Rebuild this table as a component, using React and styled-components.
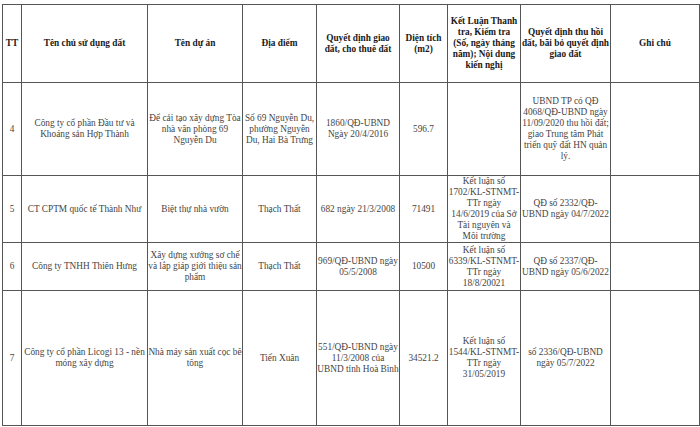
import styled, { createGlobalStyle } from "styled-components";

const GlobalStyle = createGlobalStyle`
  html, body {
    margin: 0;
    padding: 0;
    background: #fff;
  }
`;

const Page = styled.div`
  padding: 4px 1px 0 2px;
  width: 700px;
  box-sizing: border-box;
`;

const Table = styled.table`
  width: 697px;
  border-collapse: collapse;
  table-layout: fixed;
  font-family: "Liberation Serif", "Times New Roman", serif;
  font-size: 9.3px;
  line-height: 11px;
  color: #444;
`;

const Th = styled.th`
  border: 1px solid #555;
  font-weight: bold;
  color: #1a1a1a;
  text-align: center;
  vertical-align: middle;
  padding: 0;
  white-space: pre-line;
`;

const Td = styled.td`
  border: 1px solid #555;
  text-align: center;
  vertical-align: middle;
  padding: 0;
  white-space: pre-line;
`;

const Row = styled.tr`
  height: ${(p) => p.h}px;
`;

const widths = [19, 126, 95, 74, 83, 48, 73, 90, 89];

const headers = [
  "TT",
  "Tên chủ sử dụng đất",
  "Tên dự án",
  "Địa điểm",
  "Quyết định giao\nđất, cho thuê đất",
  "Diện tích\n(m2)",
  "Kết Luận Thanh\ntra, Kiểm tra\n(Số, ngày tháng\nnăm); Nội dung\nkiến nghị",
  "Quyết định thu hồi\nđất, bãi bỏ quyết định\ngiao đất",
  "Ghi chú",
];

const rows = [
  {
    h: 93,
    cells: [
      "4",
      "Công ty cổ phần Đầu tư và\nKhoáng sản Hợp Thành",
      "Để cải tạo xây dựng Tòa\nnhà văn phòng 69\nNguyễn Du",
      "Số 69 Nguyễn Du,\nphường Nguyễn\nDu, Hai Bà Trưng",
      "1860/QĐ-UBND\nNgày 20/4/2016",
      "596.7",
      "",
      "UBND TP có QĐ\n4068/QĐ-UBND ngày\n11/09/2020 thu hồi đất;\ngiao Trung tâm Phát\ntriển quỹ đất HN quản\nlý.",
      "",
    ],
  },
  {
    h: 67,
    cells: [
      "5",
      "CT CPTM quốc tế Thành Như",
      "Biệt thự nhà vườn",
      "Thạch Thất",
      "682 ngày 21/3/2008",
      "71491",
      "Kết luận số\n1702/KL-STNMT-\nTTr ngày\n14/6/2019 của Sở\nTài nguyên và\nMôi trường",
      "QĐ số 2332/QĐ-\nUBND ngày 04/7/2022",
      "",
    ],
  },
  {
    h: 48,
    cells: [
      "6",
      "Công ty TNHH Thiên Hưng",
      "Xây dựng xưởng sơ chế\nvà lắp giáp giới thiệu sản\nphẩm",
      "Thạch Thất",
      "969/QĐ-UBND ngày\n05/5/2008",
      "10500",
      "Kết luận số\n6339/KL-STNMT-\nTTr ngày\n18/8/20021",
      "QĐ số 2337/QĐ-\nUBND ngày 05/6/2022",
      "",
    ],
  },
  {
    h: 135,
    cells: [
      "7",
      "Công ty cổ phần Licogi 13 - nền\nmóng xây dựng",
      "Nhà máy sản xuất cọc bê\ntông",
      "Tiến Xuân",
      "551/QĐ-UBND ngày\n11/3/2008 của\nUBND tỉnh Hoà Bình",
      "34521.2",
      "Kết luận số\n1544/KL-STNMT-\nTTr ngày\n31/05/2019",
      "số 2336/QĐ-UBND\nngày 05/7/2022",
      "",
    ],
  },
];

export default function App() {
  return (
    <Page>
      <GlobalStyle />
      <Table>
        <colgroup>
          {widths.map((w, i) => (
            <col key={i} style={{ width: w }} />
          ))}
        </colgroup>
        <thead>
          <Row h={78}>
            {headers.map((t, i) => (
              <Th key={i}>{t}</Th>
            ))}
          </Row>
        </thead>
        <tbody>
          {rows.map((r, i) => (
            <Row key={i} h={r.h}>
              {r.cells.map((c, j) => (
                <Td key={j}>{c}</Td>
              ))}
            </Row>
          ))}
        </tbody>
      </Table>
    </Page>
  );
}
